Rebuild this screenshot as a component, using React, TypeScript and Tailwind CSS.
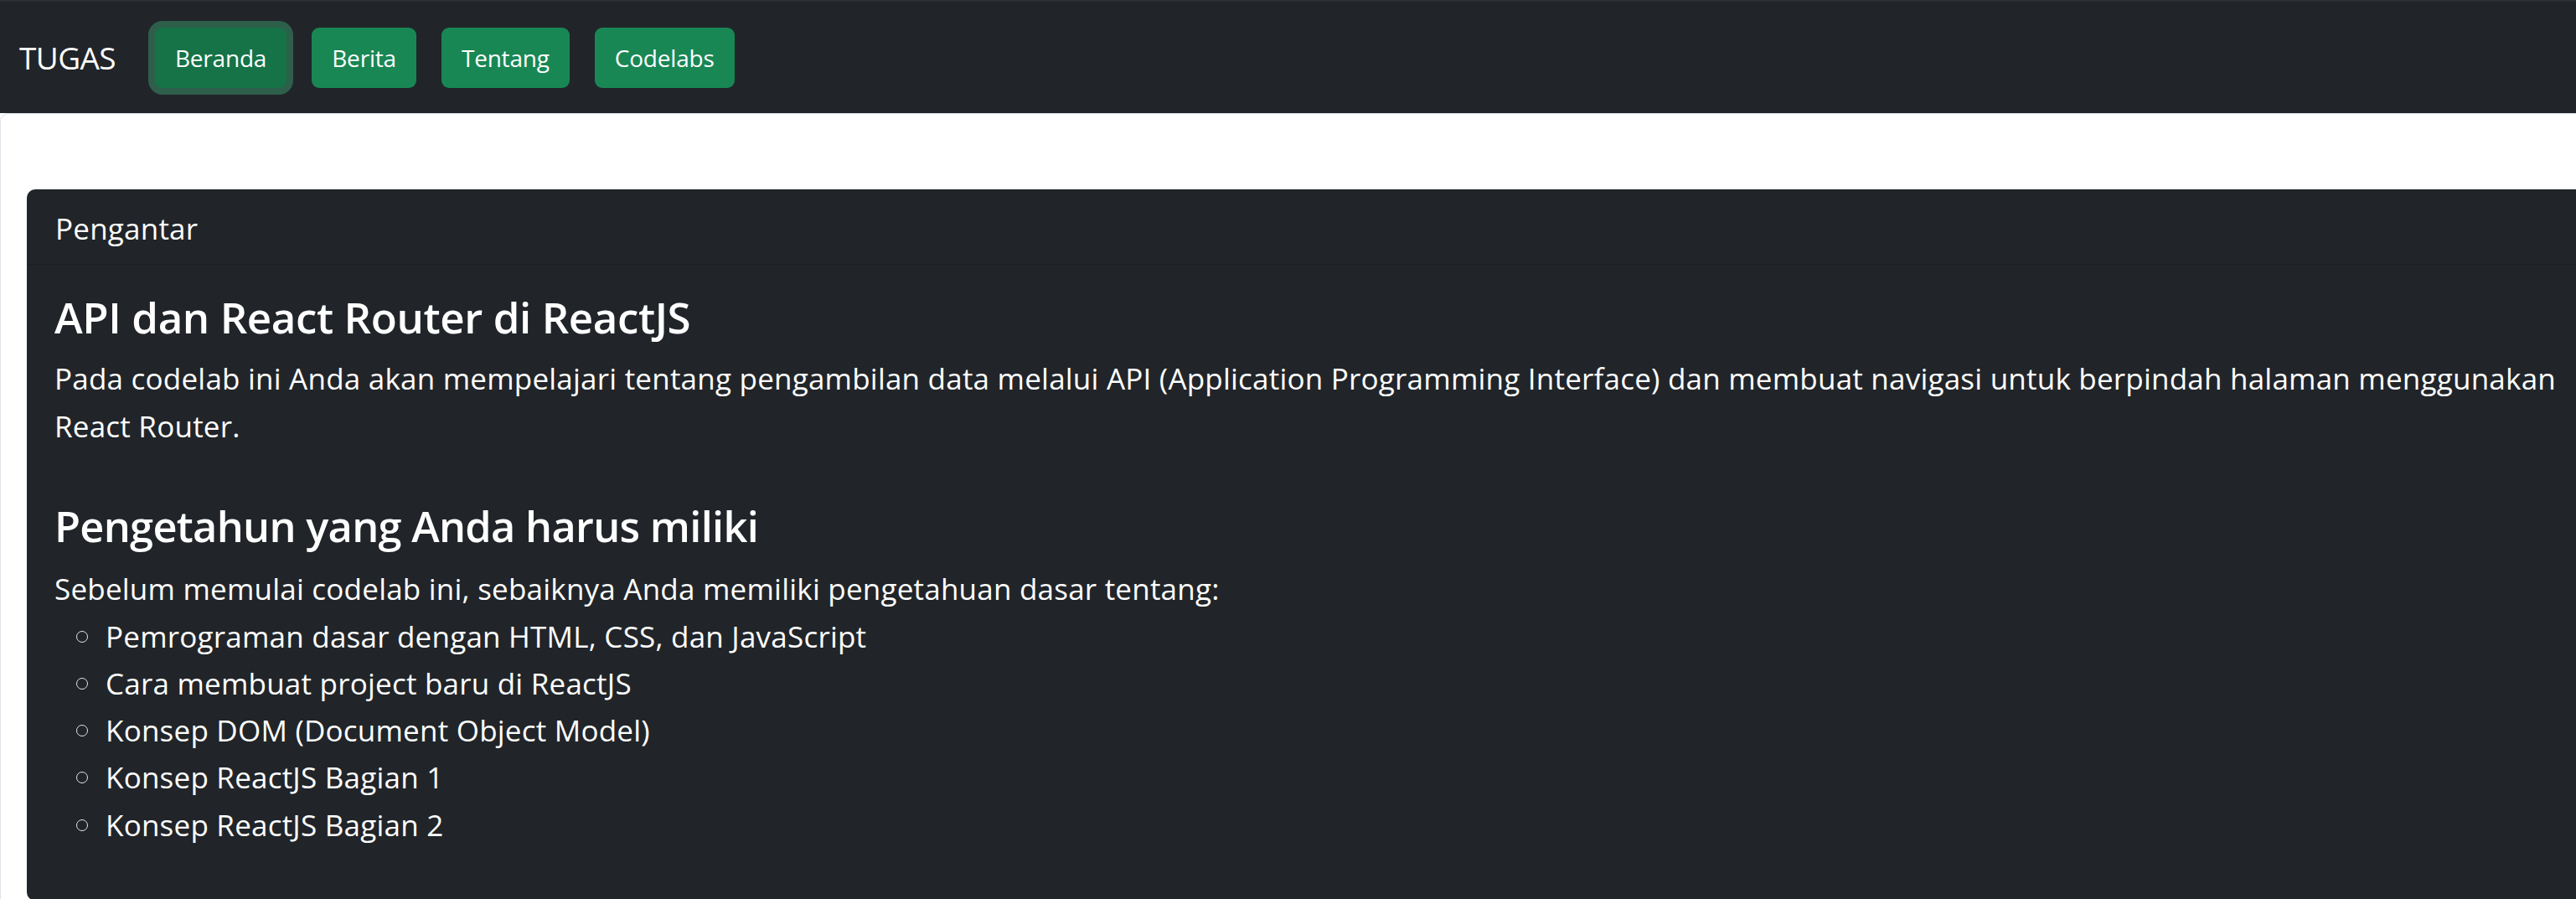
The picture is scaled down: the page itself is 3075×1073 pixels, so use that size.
import React from "react";

const navItems = ["Beranda", "Berita", "Tentang", "Codelabs"];

const prereqs = [
  "Pemrograman dasar dengan HTML, CSS, dan JavaScript",
  "Cara membuat project baru di ReactJS",
  "Konsep DOM (Document Object Model)",
  "Konsep ReactJS Bagian 1",
  "Konsep ReactJS Bagian 2",
];

export default function App() {
  return (
    <div
      className="min-h-screen w-[3075px] overflow-hidden bg-white text-white"
      style={{ fontFamily: '"Open Sans", "Noto Sans", sans-serif' }}
    >
      <div className="h-[2px] bg-[#2d2f32]" />
      <nav className="flex h-[133px] items-center bg-[#212529] pl-[23px]">
        <span className="mr-[47px] text-[37px] leading-none tracking-[-0.6px]">TUGAS</span>
        <div className="flex items-center gap-[30px]">
          {navItems.map((item, i) => (
            <button
              key={item}
              className={
                i === 0
                  ? "flex h-[72px] items-center rounded-[9px] bg-[#157347] px-[24px] text-[28px] leading-none tracking-[-0.2px] text-white shadow-[0_0_0_8px_rgba(60,153,110,0.5)]"
                  : "flex h-[72px] items-center rounded-[9px] bg-[#198754] px-[24px] text-[28px] leading-none tracking-[-0.2px] text-white"
              }
            >
              {item}
            </button>
          ))}
        </div>
      </nav>
      <div className="min-h-[938px] rounded-tl-[10px] border-l border-t border-[#dee2e6] bg-white pl-[31px] pt-[90px]">
        <div className="w-[3091px] rounded-[10px] bg-[#212529] tracking-[0.22px]">
          <div className="flex h-[90px] items-center border-b border-[#1b1e21] px-[34px] pt-[5px] text-[35px]">
            Pengantar
          </div>
          <div className="px-[33px] pb-[62px] pt-[30px]">
            <h2 className="text-[51px] font-semibold leading-[64px] tracking-[-0.4px]">
              API dan React Router di ReactJS
            </h2>
            <p className="mt-[14px] text-[35px] leading-[56.5px]">
              Pada codelab ini Anda akan mempelajari tentang pengambilan data melalui API (Application Programming
              Interface) dan membuat navigasi untuk berpindah halaman menggunakan React Router.
            </p>
            <h2 className="mt-[59px] text-[50.5px] font-semibold leading-[64px] tracking-[-0.7px]">
              Pengetahun yang Anda harus miliki
            </h2>
            <p className="mt-[15px] text-[35px] leading-[56.5px]">
              Sebelum memulai codelab ini, sebaiknya Anda memiliki pengetahuan dasar tentang:
            </p>
            <ul>
              {prereqs.map((p) => (
                <li key={p} className="flex items-center text-[35px] leading-[56.25px]">
                  <span className="ml-[26px] mr-[21px] h-[14px] w-[14px] shrink-0 rounded-full border-[1.5px] border-[#e5e5e5]" />
                  <span>{p}</span>
                </li>
              ))}
            </ul>
          </div>
        </div>
      </div>
    </div>
  );
}
